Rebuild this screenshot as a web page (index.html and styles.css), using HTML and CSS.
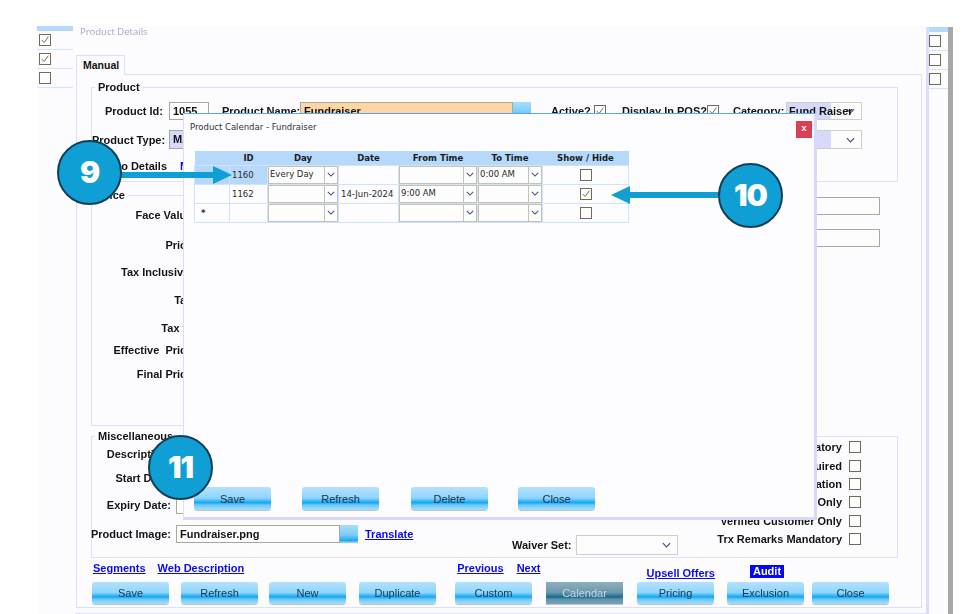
FILE: index.html
```html
<!DOCTYPE html>
<html lang="en">
<head>
  <meta charset="UTF-8">
  <title>Product Details</title>
  <link rel="stylesheet" href="styles.css">
</head>
<body>

<div class="desktop">

  <div class="side side-left">
    <div class="side-top"></div>
    <div class="side-row"><span class="chk on"><svg viewBox="0 0 12 12"><path d="M2 6l3 3 5-7"/></svg></span></div>
    <div class="side-row"><span class="chk on"><svg viewBox="0 0 12 12"><path d="M2 6l3 3 5-7"/></svg></span></div>
    <div class="side-row"><span class="chk"></span></div>
  </div>

  <div class="main">
    <div class="main-title">Product Details</div>
    <div class="tab">Manual</div>

    <div class="pane">
      <fieldset class="group group-product">
        <legend>Product</legend>
        <div class="row row-first">
          <label class="lbl lbl-id">Product Id:</label>
          <div class="field field-id">1055</div>
          <label class="lbl lbl-name">Product Name:</label>
          <div class="field field-name">Fundraiser</div>
          <div class="browse"></div>
          <label class="lbl lbl-active">Active?</label>
          <span class="chk on"><svg viewBox="0 0 12 12"><path d="M2 6l3 3 5-7"/></svg></span>
          <label class="lbl lbl-pos">Display In POS?</label>
          <span class="chk on"><svg viewBox="0 0 12 12"><path d="M2 6l3 3 5-7"/></svg></span>
          <label class="lbl lbl-cat">Category:</label>
          <div class="select select-cat">
            <span class="select-fill">Fund Raiser</span>
            <svg class="chev" viewBox="0 0 10 6"><path d="M1 1l4 4 4-4"/></svg>
          </div>
        </div>
        <div class="row row-second">
          <label class="lbl lbl-id">Product Type:</label>
          <div class="field field-type">MANUAL</div>
          <div class="select select-right">
            <span class="select-fill"></span>
            <svg class="chev" viewBox="0 0 10 6"><path d="M1 1l4 4 4-4"/></svg>
          </div>
        </div>
        <div class="row row-third">
          <label class="lbl lbl-promo">Promo Details</label>
          <a class="link link-more">More</a>
        </div>
      </fieldset>

      <div class="middle">
        <fieldset class="group group-price">
          <legend>Price</legend>
          <div class="price-labels">
            <label class="lbl">Face Value:</label>
            <label class="lbl">Price:</label>
            <label class="lbl">Tax Inclusive?</label>
            <label class="lbl">Tax:</label>
            <label class="lbl">Tax %:</label>
            <label class="lbl">Effective&nbsp; Price:</label>
            <label class="lbl">Final Price:</label>
          </div>
        </fieldset>
        <div class="right-fields">
          <div class="field field-wide"></div>
          <div class="field field-wide"></div>
        </div>
      </div>

      <fieldset class="group group-misc">
        <legend>Miscellaneous</legend>
        <div class="misc-left">
          <label class="lbl">Description:</label><div></div>
          <label class="lbl">Start Date:</label><div></div>
          <label class="lbl">Expiry Date:</label><div class="field field-date"></div>
          <label class="lbl lbl-image">Product Image:</label>
          <div class="image-line">
            <div class="field field-image">Fundraiser.png</div>
            <div class="browse browse-image">...</div>
            <a class="link link-translate">Translate</a>
          </div>
        </div>
        <div class="waiver">
          <label class="lbl">Waiver Set:</label>
          <div class="select select-waiver">
            <svg class="chev" viewBox="0 0 10 6"><path d="M1 1l4 4 4-4"/></svg>
          </div>
        </div>
        <div class="misc-right">
          <label class="lbl">Customer Mandatory</label><span class="chk"></span>
          <label class="lbl">Waiver Required</label><span class="chk"></span>
          <label class="lbl">Registration</label><span class="chk"></span>
          <label class="lbl">Member Only</label><span class="chk"></span>
          <label class="lbl">Verified Customer Only</label><span class="chk"></span>
          <label class="lbl">Trx Remarks Mandatory</label><span class="chk"></span>
        </div>
      </fieldset>

      <div class="links">
        <a class="link">Segments</a>
        <a class="link link-web">Web Description</a>
        <a class="link link-prev">Previous</a>
        <a class="link link-next">Next</a>
        <a class="link link-upsell">Upsell Offers</a>
        <a class="link-audit">Audit</a>
      </div>

      <div class="main-buttons">
        <button class="btn">Save</button>
        <button class="btn">Refresh</button>
        <button class="btn">New</button>
        <button class="btn">Duplicate</button>
        <button class="btn">Custom</button>
        <button class="btn btn-off">Calendar</button>
        <button class="btn">Pricing</button>
        <button class="btn">Exclusion</button>
        <button class="btn">Close</button>
      </div>
    </div>
    <div class="main-foot"></div>
  </div>

  <div class="side side-right">
    <div class="side-top"></div>
    <div class="side-row"><span class="chk"></span></div>
    <div class="side-row"><span class="chk"></span></div>
    <div class="side-row"><span class="chk"></span></div>
  </div>

  <!-- calendar popup -->
  <div class="dialog">
    <div class="dialog-head">
      <span class="dialog-title">Product Calendar - Fundraiser</span>
      <span class="dialog-close">x</span>
    </div>

    <table class="cal">
      <colgroup>
        <col class="c-head"><col class="c-id"><col class="c-day"><col class="c-date"><col class="c-from"><col class="c-to"><col class="c-show">
      </colgroup>
      <thead>
        <tr><th></th><th>ID</th><th>Day</th><th>Date</th><th>From Time</th><th>To Time</th><th>Show / Hide</th></tr>
      </thead>
      <tbody>
        <tr class="tall">
          <td class="sel"></td>
          <td class="sel">1160</td>
          <td><div class="combo"><span>Every Day</span><i><svg viewBox="0 0 10 6"><path d="M1 1l4 4 4-4"/></svg></i></div></td>
          <td></td>
          <td><div class="combo"><span></span><i><svg viewBox="0 0 10 6"><path d="M1 1l4 4 4-4"/></svg></i></div></td>
          <td><div class="combo"><span>0:00 AM</span><i><svg viewBox="0 0 10 6"><path d="M1 1l4 4 4-4"/></svg></i></div></td>
          <td class="mid"><span class="chk"></span></td>
        </tr>
        <tr>
          <td></td>
          <td>1162</td>
          <td><div class="combo"><span></span><i><svg viewBox="0 0 10 6"><path d="M1 1l4 4 4-4"/></svg></i></div></td>
          <td>14-Jun-2024</td>
          <td><div class="combo"><span>9:00 AM</span><i><svg viewBox="0 0 10 6"><path d="M1 1l4 4 4-4"/></svg></i></div></td>
          <td><div class="combo"><span></span><i><svg viewBox="0 0 10 6"><path d="M1 1l4 4 4-4"/></svg></i></div></td>
          <td class="mid"><span class="chk on"><svg viewBox="0 0 12 12"><path d="M2 6l3 3 5-7"/></svg></span></td>
        </tr>
        <tr class="tall">
          <td class="star">*</td>
          <td></td>
          <td><div class="combo"><span></span><i><svg viewBox="0 0 10 6"><path d="M1 1l4 4 4-4"/></svg></i></div></td>
          <td></td>
          <td><div class="combo"><span></span><i><svg viewBox="0 0 10 6"><path d="M1 1l4 4 4-4"/></svg></i></div></td>
          <td><div class="combo"><span></span><i><svg viewBox="0 0 10 6"><path d="M1 1l4 4 4-4"/></svg></i></div></td>
          <td class="mid"><span class="chk"></span></td>
        </tr>
      </tbody>
    </table>

    <div class="dialog-buttons">
      <button class="btn">Save</button>
      <button class="btn">Refresh</button>
      <button class="btn">Delete</button>
      <button class="btn">Close</button>
    </div>
  </div>

  <!-- numbered callouts -->
  <svg class="arrow arrow-9" viewBox="0 0 112 20"><path d="M0 7h93V1l19 9-19 9v-6H0z"/></svg>
  <svg class="arrow arrow-10" viewBox="0 0 108 20"><path d="M108 7H19V1L0 10l19 9v-6h89z"/></svg>
  <div class="callout callout-9">9</div>
  <div class="callout callout-10">10</div>
  <div class="callout callout-11">11</div>

</div>

</body>
</html>
```

FILE: styles.css
```css
* {
  box-sizing: border-box;
}

body {
  margin: 0;
  background: #ffffff;
  font-family: "Liberation Sans", Arial, sans-serif;
  font-size: 11px;
  color: #141414;
}

.desktop {
  position: relative;
  display: flex;
  width: 975px;
  height: 614px;
  padding: 26px 0 0 37px;
  overflow: hidden;
  filter: blur(0.35px);
}

/* side strips with the list checkboxes */
.side {
  background: #fcfcff;
  height: 588px;
}

.side-left {
  width: 36px;
}

.side-right {
  width: 27px;
  border-left: 3px solid #dcdcfb;
  border-right: 5px solid #a8a8a8;
  margin-top: 1px;
}

.side-top {
  height: 5px;
  background: #b5d8fb;
}

.side-row {
  display: flex;
  align-items: center;
  height: 19px;
  padding-left: 2px;
  border-bottom: 1px solid #d3e5fb;
}

.side-right .side-row {
  padding-left: 0;
}

.chk {
  display: inline-flex;
  align-items: center;
  justify-content: center;
  width: 12px;
  height: 12px;
  border: 1.5px solid #6e6e58;
  background: #fdfdfd;
  flex: none;
}

.chk svg {
  width: 10px;
  height: 10px;
}

.chk path {
  fill: none;
  stroke: #6e6e62;
  stroke-width: 1.2;
}

/* main window */
.main {
  width: 853px;
  height: 588px;
  padding-left: 3px;
  background: #fcfcff;
}

.main-title {
  height: 12px;
  margin: 0 0 17px 4px;
  line-height: 11px;
  font-family: "Open Sans", sans-serif;
  font-size: 9.5px;
  color: #a8a6c4;
}

.tab {
  position: relative;
  z-index: 1;
  width: 49px;
  height: 20px;
  margin-bottom: -1px;
  padding: 3px 0 0 6px;
  border: 1px solid #dedefb;
  border-bottom: none;
  background: #fcfcff;
  font-size: 10.5px;
  font-weight: bold;
}

.pane {
  width: 846px;
  height: 534px;
  padding: 6px 23px 0 14px;
  border: 1px solid #dedefb;
}

.main-foot {
  height: 2px;
  margin: 5px 0 0 -1px;
  background: #dedefb;
}

.group {
  margin: 0;
  padding: 0;
  min-width: 0;
  border: 1px solid #dedefb;
}

.group legend {
  margin-left: 3px;
  padding: 0 3px;
  line-height: 13px;
  font-weight: bold;
}

.group-product {
  height: 101px;
  padding: 8px 35px 0 0;
}

.lbl {
  font-weight: bold;
  white-space: nowrap;
}

.row {
  display: flex;
  align-items: center;
}

.row-first {
  height: 18px;
}

.row-second {
  height: 19px;
  margin-top: 10px;
}

.row-third {
  height: 14px;
  margin-top: 10px;
}

.field {
  height: 18px;
  padding: 2px 0 0 3px;
  border: 1.5px solid #a9a998;
  background: #fdfdfd;
  font-weight: bold;
  white-space: nowrap;
  overflow: hidden;
}

.lbl-id {
  width: 71px;
  margin-right: 6px;
  text-align: right;
}

.field-id {
  width: 40px;
}

.lbl-name {
  margin: 0 5px 0 13px;
  width: 73px;
}

.field-name {
  width: 213px;
  background: #fdd6a3;
}

.browse {
  width: 18px;
  height: 18px;
  background: linear-gradient(#a9dcfd, #7ccdfd 55%, #1fa9f5 85%, #9ed9fd);
}

.lbl-active {
  margin: 0 5px 0 20px;
  width: 38px;
}

.lbl-pos {
  margin: 0 7px 0 16px;
  width: 78px;
}

.lbl-cat {
  margin: 0 6px 0 14px;
  width: 47px;
}

.select {
  display: flex;
  align-items: center;
  justify-content: flex-end;
  position: relative;
  height: 19px;
  padding-right: 6px;
  border: 1.5px solid #cfcfc4;
  background: #fdfdfd;
}

.select-fill {
  position: absolute;
  left: 0;
  top: 0;
  bottom: 0;
  width: 44px;
  padding: 2px 0 0 2px;
  background: #d8d8fb;
  font-weight: bold;
  white-space: nowrap;
}

.chev {
  width: 9px;
  height: 6px;
}

.chev path,
.combo path {
  fill: none;
  stroke: #4b4b7d;
  stroke-width: 1.3;
}

.select-cat {
  width: 76px;
  height: 18px;
}

.select-right {
  width: 76px;
  margin-left: auto;
}

.select-right .select-fill {
  width: 44px;
}

.field-type {
  width: 60px;
  height: 19px;
  background: #d8d8fb;
}

.lbl-promo {
  width: 75px;
  text-align: right;
}

.link {
  color: #0a0af0;
  font-weight: bold;
  text-decoration: underline;
  white-space: nowrap;
}

.link-more {
  margin-left: 13px;
  text-decoration: none;
}

/* price block */
.middle {
  display: flex;
  margin-top: 7px;
}

.group-price {
  width: 420px;
  height: 237px;
}

.price-labels {
  display: grid;
  grid-template-rows: 30px 27px 28px 28px 22px 24px 13px;
  justify-items: end;
  width: 104px;
  padding-top: 7px;
  line-height: 13px;
}

.right-fields {
  display: flex;
  flex-direction: column;
  gap: 14px;
  margin: 8px 18px 0 auto;
}

.field-wide {
  width: 100px;
}

/* miscellaneous block */
.group-misc {
  display: flex;
  height: 128px;
  margin-top: 4px;
}

.misc-left {
  display: grid;
  grid-template-columns: 79px 1fr;
  grid-template-rows: 24px 27px 26px 18px;
  column-gap: 5px;
  width: 420px;
  padding-top: 5px;
  line-height: 13px;
}

.misc-left .lbl {
  justify-self: end;
}

.lbl-image {
  padding-top: 3px;
}

.field-date {
  width: 20px;
  height: 16px;
  margin-top: -1px;
}

.image-line {
  display: flex;
  align-items: center;
  height: 18px;
}

.field-image {
  width: 164px;
}

.browse-image {
  padding-top: 7px;
  color: #4f6f85;
  font-size: 8px;
  text-align: center;
}

.link-translate {
  margin-left: 7px;
}

.waiver {
  display: flex;
  align-items: center;
  gap: 4px;
  align-self: flex-end;
  margin-bottom: 2px;
}

.select-waiver {
  width: 102px;
  height: 20px;
}

.misc-right {
  display: grid;
  grid-template-columns: auto 12px;
  grid-auto-rows: 18.4px;
  column-gap: 7px;
  align-items: center;
  justify-items: end;
  margin: -5px 36px 0 auto;
}

/* bottom of the main window */
.links {
  display: flex;
  height: 18px;
  margin: 3px 0 3px 2px;
  line-height: 14px;
}

.link-web {
  margin-left: 12px;
}

.link-prev {
  margin-left: 213px;
}

.link-next {
  margin-left: 13px;
}

.link-upsell {
  margin: 5px 0 0 106px;
}

.link-audit {
  align-self: flex-start;
  height: 13px;
  margin: 4px 0 0 35px;
  padding: 0 3px;
  background: #0808ee;
  color: #ffffff;
  font-weight: bold;
  line-height: 13px;
}

.main-buttons {
  display: grid;
  grid-template-columns: 89px 88px 90px 96px 91px 91px 90px 85px 77px;
  padding-left: 1px;
}

.btn {
  width: 77px;
  height: 22px;
  padding: 0;
  border: none;
  border-radius: 3px;
  background: linear-gradient(#b4e1fd, #8fd5fe 48%, #62c4fc 55%, #10a8f6 68%, #6cc9fb 78%, #a6dcfb 100%);
  box-shadow: 0 1px 0 #b9c6d2;
  color: #17364a;
  font-family: "Liberation Sans", Arial, sans-serif;
  font-size: 11px;
}

.btn-off {
  border-radius: 0;
  background: linear-gradient(#8db0c1, #6d97ab 48%, #2b7a99 62%, #176a8c 68%, #5d93aa 78%, #7ba5b7 100%);
  color: #c9d7de;
}

/* calendar popup */
.dialog {
  position: absolute;
  left: 183px;
  top: 113px;
  display: flex;
  flex-direction: column;
  width: 634px;
  height: 407px;
  padding: 0 0 7px 10px;
  border-top: 1px solid #58a8ec;
  border-left: 1px solid #dcdcfb;
  border-right: 3px solid #d8d8fb;
  border-bottom: 3px solid #d8d8fb;
  background: #fdfcff;
}

.dialog-head {
  display: flex;
  justify-content: space-between;
  height: 37px;
  padding: 7px 2px 0 0;
  margin-left: -4px;
}

.dialog-title {
  font-family: "DejaVu Sans", sans-serif;
  font-size: 8.5px;
  line-height: 12px;
  color: #333333;
}

.dialog-close {
  width: 16px;
  height: 17px;
  background: #dc3f54;
  color: #ffffff;
  font-size: 9px;
  font-weight: bold;
  line-height: 15px;
  text-align: center;
}

.cal {
  width: 434px;
  table-layout: fixed;
  border-collapse: collapse;
  font-family: "DejaVu Sans", sans-serif;
  font-size: 8.5px;
  color: #2a2a2a;
}

.c-head { width: 35px; }
.c-id { width: 38px; }
.c-day { width: 71px; }
.c-date { width: 60px; }
.c-from { width: 79px; }
.c-to { width: 65px; }
.c-show { width: 86px; }

.cal th {
  height: 14px;
  padding: 0;
  background: #b5d8fb;
  font-weight: bold;
  line-height: 12px;
  color: #1a1a1a;
}

.cal td {
  height: 18px;
  padding: 0 0 0 2px;
  border: 1px solid #cfe4fb;
  white-space: nowrap;
  overflow: hidden;
}

.cal tr.tall td {
  height: 19px;
}

.cal td:has(.combo) {
  padding: 0;
}

.cal td.sel {
  background: #b5d8fb;
}

.cal td.mid {
  text-align: center;
  line-height: 0;
  padding: 0;
}

.cal td.star {
  padding-left: 6px;
  font-weight: bold;
}

.combo {
  display: flex;
  height: 18px;
  border: 1.5px solid #c2c2b6;
  background: #fdfdfd;
}

.combo span {
  flex: 1;
  padding-left: 1px;
  line-height: 15px;
}

.combo i {
  display: flex;
  align-items: center;
  justify-content: center;
  width: 13px;
  border-left: 1.5px solid #c2c2b6;
}

.combo svg {
  width: 8px;
  height: 5px;
}

.dialog-buttons {
  display: grid;
  grid-template-columns: 108px 109px 107px 77px;
  margin-top: auto;
}

.dialog-buttons .btn {
  height: 23px;
}

/* callouts */
.callout {
  position: absolute;
  width: 65px;
  height: 65px;
  border: 2px solid #123f55;
  border-radius: 50%;
  background: #0f9fd4;
  color: #ffffff;
  font-family: Inter, sans-serif;
  font-size: 30px;
  font-weight: 900;
  line-height: 60px;
  letter-spacing: -1px;
  text-align: center;
}

.callout-9 {
  left: 57px;
  top: 140px;
}

.callout-10 {
  left: 718px;
  top: 163px;
}

.callout-11 {
  left: 148px;
  top: 435px;
}

.arrow {
  position: absolute;
  height: 20px;
  fill: #0f9fd4;
}

.arrow-9 {
  left: 120px;
  top: 165px;
  width: 112px;
}

.arrow-10 {
  left: 611px;
  top: 185px;
  width: 108px;
}
```
